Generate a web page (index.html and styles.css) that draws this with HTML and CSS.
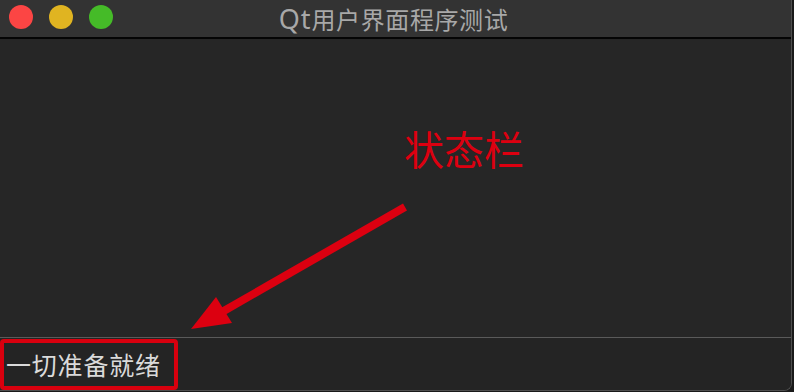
FILE: index.html
```html
<!DOCTYPE html>
<html lang="zh">
<head>
<meta charset="utf-8">
<title>Qt用户界面程序测试</title>
<link rel="stylesheet" href="styles.css">
</head>
<body>
<div class="window">
  <header class="titlebar">
    <div class="lights">
      <span class="light red"></span>
      <span class="light yellow"></span>
      <span class="light green"></span>
    </div>
    <div class="title"><span class="title-latin">Qt</span>用户界面程序测试</div>
  </header>
  <main class="central"></main>
  <footer class="statusbar">
    <span class="status-text">一切准备就绪</span>
  </footer>
  <div class="note-label">状态栏</div>
  <svg class="note-arrow" width="794" height="392" viewBox="0 0 794 392">
    <line x1="405" y1="207" x2="222" y2="312" stroke="#dc0010" stroke-width="8"/>
    <polygon points="191,329 216,297 232,323" fill="#dc0010"/>
  </svg>
  <div class="note-box"></div>
</div>
</body>
</html>
```
FILE: styles.css
```css
html, body {
  margin: 0;
  padding: 0;
  background: #1a1a1a;
}
body {
  width: 794px;
  height: 392px;
  overflow: hidden;
  font-family: "Noto Sans CJK SC", "Noto Sans", sans-serif;
}
.window {
  position: relative;
  width: 791px;
  height: 390px;
  display: flex;
  flex-direction: column;
  background: #262626;
  border-right: 1px solid #4e4e4e;
  border-bottom: 1px solid #4e4e4e;
  border-radius: 0 0 8px 0;
  overflow: hidden;
}
.titlebar {
  position: relative;
  height: 37px;
  flex: none;
  background: #333333;
  border-bottom: 2px solid #050505;
  display: flex;
  align-items: center;
  justify-content: center;
}
.lights {
  position: absolute;
  left: 9px;
  top: 5px;
  display: flex;
  gap: 16px;
}
.light {
  width: 24px;
  height: 24px;
  border-radius: 50%;
}
.red { background: #fc4544; }
.yellow { background: #e0b421; }
.green { background: #45bb28; }
.title {
  color: #a8a8a8;
  font-size: 24px;
  letter-spacing: 0.6px;
  line-height: 1;
  margin-left: -4px;
}
.title-latin {
  font-family: "Noto Sans", sans-serif;
  font-size: 27px;
  letter-spacing: 1px;
}
.central {
  flex: 1;
  background: #262626;
}
.statusbar {
  height: 52px;
  flex: none;
  border-top: 1px solid #5a5a5a;
  background: #242424;
  display: flex;
  align-items: center;
  padding-left: 6px;
}
.status-text {
  color: #dadada;
  font-size: 25px;
  letter-spacing: 0.8px;
  line-height: 1;
}
.note-label {
  position: absolute;
  left: 404px;
  top: 122px;
  color: #dc0010;
  font-size: 40px;
  line-height: 1.3;
}
.note-arrow {
  position: absolute;
  left: 0;
  top: 0;
}
.note-box {
  position: absolute;
  left: 0;
  top: 339px;
  width: 170px;
  height: 43px;
  border: 4px solid #d8000e;
  border-radius: 4px;
}
```
